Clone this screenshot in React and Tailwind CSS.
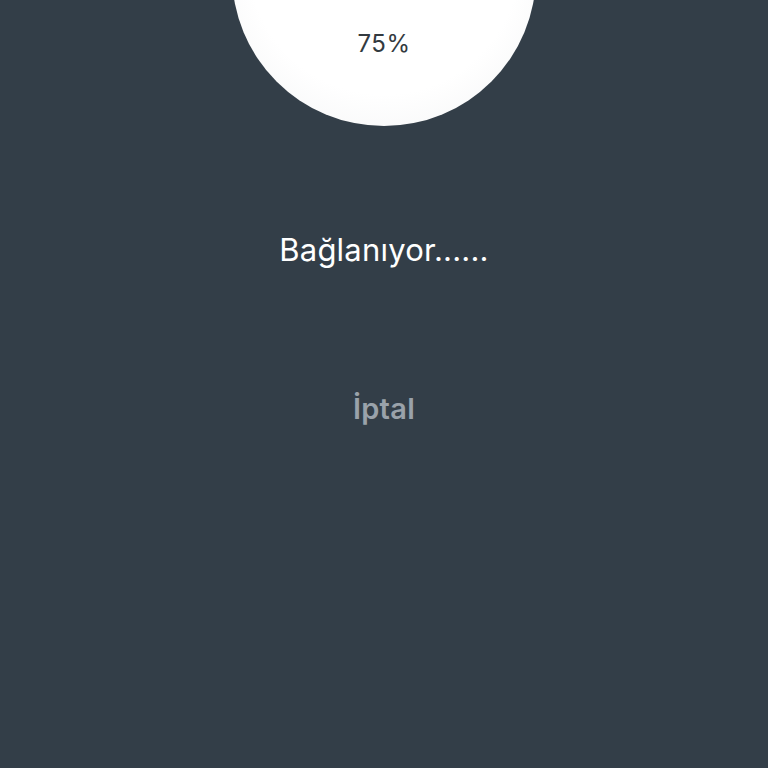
import React from 'react';

const App = () => {
  return (
    <div className="min-h-screen w-full bg-[#333e48] flex flex-col items-center overflow-hidden font-['Inter','Noto_Sans',sans-serif]">
      {/* Progress circle */}
      <div className="-mt-[178px] w-[304px] h-[304px] shrink-0 rounded-full bg-[radial-gradient(circle_at_50%_45%,#ffffff_60%,#f1f2f3_100%)] flex flex-col items-center justify-end pb-[70px]">
        <span className="text-[24px] leading-none text-[#333a40] tracking-[0.5px]">75%</span>
      </div>

      {/* Status */}
      <p className="mt-[108px] text-[31px] leading-none text-white tracking-[0.2px]">Bağlanıyor......</p>

      {/* Cancel */}
      <button className="mt-[129px] text-[29px] leading-none font-semibold text-[#9aa2aa] tracking-[0.3px]">İptal</button>
    </div>
  );
};

export default App;
